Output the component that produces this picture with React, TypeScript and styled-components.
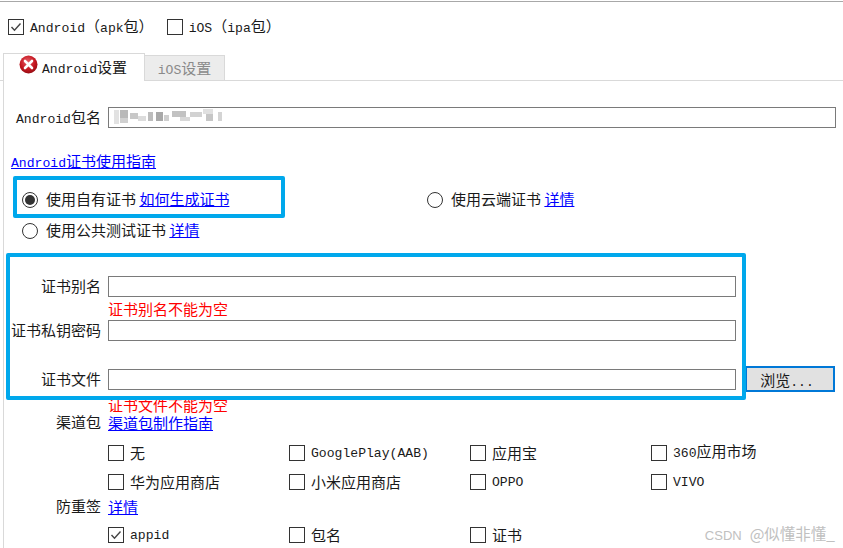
import React from "react";
import styled, { createGlobalStyle } from "styled-components";

const GlobalStyle = createGlobalStyle`
  html, body { margin: 0; padding: 0; background: #fff; }
  body { font-family: "Noto Sans CJK SC", "Liberation Mono", monospace; font-size: 15px; color: #1a1a1a; }
`;

const Page = styled.div`
  position: relative;
  width: 843px;
  height: 547px;
  overflow: hidden;
  background: #fff;
  border-top: 1px solid #a8a8a8;
  box-sizing: border-box;
  margin-top: 1px;
`;

const TopRow = styled.div`
  display: flex;
  align-items: center;
  height: 22px;
  margin-top: 14px;
  padding-left: 8px;
  gap: 13px;
`;

const Lat = styled.span`
  font-family: "Liberation Mono", monospace;
  font-size: 13.1px;
`;

const Check = styled.label`
  display: flex;
  align-items: center;
  gap: 6px;
  white-space: nowrap;
  line-height: 20px;
`;

const Box = styled.span`
  display: block;
  flex: none;
  width: 16px;
  height: 16px;
  border: 1px solid #333;
  box-sizing: border-box;
  background: #fff;
`;

const Tabs = styled.div`
  display: flex;
  align-items: flex-end;
  height: 27px;
  margin-top: 15px;
  padding-left: 3px;
  border-bottom: 1px solid #d9d9d9;
`;

const ActiveTab = styled.div`
  display: flex;
  align-items: center;
  gap: 4px;
  width: 142px;
  height: 28px;
  box-sizing: border-box;
  padding: 0 0 2px 15px;
  margin-bottom: -1px;
  border: 1px solid #d9d9d9;
  border-bottom: none;
  background: #fff;
`;

const IdleTab = styled.div`
  display: flex;
  align-items: center;
  justify-content: center;
  width: 80px;
  height: 25px;
  box-sizing: border-box;
  padding-bottom: 2px;
  border: 1px solid #d9d9d9;
  border-left: none;
  border-bottom: none;
  background: #ececec;
  color: #8a8a8a;
`;

const Panel = styled.div`
  margin-left: 3px;
  border-left: 1px solid #d9d9d9;
  height: 470px;
  padding-top: 25px;
  box-sizing: border-box;
`;

const FieldRow = styled.div<{ $mb?: number }>`
  display: grid;
  grid-template-columns: 97px 1fr;
  column-gap: 7px;
  align-items: center;
  height: 22px;
  margin-bottom: ${(p) => p.$mb ?? 0}px;
`;

const Label = styled.span`
  text-align: right;
  white-space: nowrap;
  padding-bottom: 2px;
`;

const Input = styled.div<{ $w: number }>`
  position: relative;
  width: ${(p) => p.$w}px;
  height: 21px;
  border: 1px solid #7a7a7a;
  box-sizing: border-box;
  background: #fff;
`;

const FileWrap = styled.div`
  display: flex;
  align-items: center;
  gap: 9px;
`;

const Browse = styled.button`
  width: 90px;
  height: 26px;
  flex: none;
  padding: 0 6px 0 0;
  border: 2px solid #0078d7;
  background: #e1e1e1;
  font: inherit;
  color: #1a1a1a;
`;

const Link = styled.a`
  color: #0000ff;
  text-decoration: underline;
  white-space: nowrap;
`;

const GuideRow = styled.div`
  margin-top: 22px;
  margin-left: 7px;
  height: 22px;
  line-height: 22px;
`;

const RadioGrid = styled.div`
  display: grid;
  grid-template-columns: 405px 1fr;
  grid-auto-rows: 31px;
  align-items: center;
  margin-top: 12px;
  padding-left: 18px;
`;

const RadioItem = styled.div`
  display: flex;
  align-items: center;
  gap: 8px;
  white-space: nowrap;
`;

const RadioText = styled.span`
  padding-bottom: 2px;
`;

const RadioDot = styled.span<{ $on?: boolean }>`
  display: flex;
  align-items: center;
  justify-content: center;
  width: 16px;
  height: 16px;
  flex: none;
  border-radius: 50%;
  border: 1px solid #333;
  box-sizing: border-box;
  &::after {
    content: "";
    display: ${(p) => (p.$on ? "block" : "none")};
    width: 10px;
    height: 10px;
    border-radius: 50%;
    background: #333;
  }
`;

const Fields = styled.div`
  margin-top: 29px;
`;

const ErrorText = styled.div<{ $h: number; $line: number }>`
  color: #ff0000;
  margin-left: 104px;
  height: ${(p) => p.$h}px;
  line-height: ${(p) => p.$line}px;
  white-space: nowrap;
`;

const OptionGrid = styled.div<{ $mt: number; $mb?: number }>`
  display: grid;
  grid-template-columns: repeat(4, 181px);
  grid-auto-rows: 29px;
  align-items: center;
  margin-left: 104px;
  margin-top: ${(p) => p.$mt}px;
  margin-bottom: ${(p) => p.$mb ?? 0}px;
`;

const Highlight = styled.div<{ $x: number; $y: number; $w: number; $h: number }>`
  position: absolute;
  left: ${(p) => p.$x}px;
  top: ${(p) => p.$y}px;
  width: ${(p) => p.$w}px;
  height: ${(p) => p.$h}px;
  border: 4px solid #00a8ec;
  border-radius: 2px;
  box-sizing: border-box;
  pointer-events: none;
`;

const Watermark = styled.div`
  position: absolute;
  right: 8px;
  bottom: 4px;
  display: flex;
  align-items: baseline;
  gap: 8px;
  color: #c0c0c0;
  font-size: 15.5px;
  white-space: nowrap;
`;

const WatermarkBrand = styled.span`
  font-family: "Liberation Sans", sans-serif;
  font-size: 13px;
`;

const Mosaic = styled.svg`
  position: absolute;
  left: 1px;
  top: -3px;
`;

const TickBox = () => (
  <Box>
    <svg width="14" height="14" viewBox="0 0 14 14" style={{ display: "block" }}>
      <path d="M2.5 7 L5.5 10.2 L11.5 3.5" fill="none" stroke="#444" strokeWidth="1.4" />
    </svg>
  </Box>
);

const ErrorIcon = () => (
  <svg width="19" height="19" viewBox="0 0 19 19" style={{ flex: "none", marginTop: -4 }}>
    <defs>
      <radialGradient id="err" cx="45%" cy="35%" r="70%">
        <stop offset="0%" stopColor="#e8606a" />
        <stop offset="60%" stopColor="#c4161f" />
        <stop offset="100%" stopColor="#8c0c12" />
      </radialGradient>
    </defs>
    <circle cx="9.5" cy="9.5" r="9" fill="url(#err)" />
    <path d="M6 6 L13 13 M13 6 L6 13" stroke="#fff" strokeWidth="2.6" strokeLinecap="round" />
  </svg>
);

// blurred-out package name
const mosaicCells: [number, number, number, number, string][] = [
  [4, 5, 5, 14, "#e2e2e2"], [10, 5, 8, 8, "#b9b9b9"], [10, 13, 8, 5, "#d0d0d0"], [20, 8, 8, 6, "#c8c8c8"],
  [28, 11, 8, 5, "#dcdcdc"], [38, 7, 5, 9, "#bdbdbd"], [46, 7, 7, 9, "#a9a9a9"], [54, 10, 5, 6, "#cfcfcf"],
  [62, 6, 14, 6, "#c2c2c2"], [70, 12, 10, 4, "#d8d8d8"], [80, 7, 12, 5, "#d2d2d2"], [93, 4, 10, 5, "#e0e0e0"],
  [96, 9, 7, 7, "#c6c6c6"], [108, 7, 4, 9, "#d4d4d4"],
];

const channels = [
  "无", "GooglePlay(AAB)", "应用宝", "360应用市场",
  "华为应用商店", "小米应用商店", "OPPO", "VIVO",
];

// wraps the ascii runs so latin and CJK keep the reference's widths
const Mixed = ({ text }: { text: string }) => (
  <>
    {text.split(/([\x20-\x7e]+)/).map((part, i) =>
      /[\x20-\x7e]/.test(part) ? <Lat key={i}>{part}</Lat> : part
    )}
  </>
);

export default function App() {
  return (
    <Page>
      <GlobalStyle />
      <TopRow>
        <Check>
          <TickBox />
          <span><Mixed text="Android（apk包）" /></span>
        </Check>
        <Check>
          <Box />
          <span><Mixed text="iOS（ipa包）" /></span>
        </Check>
      </TopRow>
      <Tabs>
        <ActiveTab>
          <ErrorIcon />
          <span><Mixed text="Android设置" /></span>
        </ActiveTab>
        <IdleTab><span><Mixed text="iOS设置" /></span></IdleTab>
      </Tabs>
      <Panel>
        <FieldRow>
          <Label><Mixed text="Android包名" /></Label>
          <Input $w={728}>
            <Mosaic width="120" height="24">
              {mosaicCells.map(([x, y, w, h, c], i) => (
                <rect key={i} x={x} y={y} width={w} height={h} fill={c} />
              ))}
            </Mosaic>
          </Input>
        </FieldRow>
        <GuideRow>
          <Link><Mixed text="Android证书使用指南" /></Link>
        </GuideRow>
        <RadioGrid>
          <RadioItem>
            <RadioDot $on />
            <RadioText>使用自有证书 <Link>如何生成证书</Link></RadioText>
          </RadioItem>
          <RadioItem>
            <RadioDot />
            <RadioText>使用云端证书 <Link>详情</Link></RadioText>
          </RadioItem>
          <RadioItem>
            <RadioDot />
            <RadioText>使用公共测试证书 <Link>详情</Link></RadioText>
          </RadioItem>
        </RadioGrid>
        <Fields>
          <FieldRow>
            <Label>证书别名</Label>
            <Input $w={628} />
          </FieldRow>
          <ErrorText $h={22} $line={24}>证书别名不能为空</ErrorText>
          <FieldRow $mb={25}>
            <Label>证书私钥密码</Label>
            <Input $w={628} />
          </FieldRow>
          <FieldRow>
            <Label>证书文件</Label>
            <FileWrap>
              <Input $w={628} />
              <Browse>浏览<Lat>...</Lat></Browse>
            </FileWrap>
          </FieldRow>
          <ErrorText $h={23} $line={34}>证书文件不能为空</ErrorText>
        </Fields>
        <FieldRow>
          <Label>渠道包</Label>
          <span><Link>渠道包制作指南</Link></span>
        </FieldRow>
        <OptionGrid $mt={5} $mb={-1}>
          {channels.map((name) => (
            <Check key={name}>
              <Box />
              <span><Mixed text={name} /></span>
            </Check>
          ))}
        </OptionGrid>
        <FieldRow>
          <Label>防重签</Label>
          <span><Link>详情</Link></span>
        </FieldRow>
        <OptionGrid $mt={3}>
          <Check><TickBox /><span><Lat>appid</Lat></span></Check>
          <Check><Box /><span>包名</span></Check>
          <Check><Box /><span>证书</span></Check>
        </OptionGrid>
      </Panel>
      <Highlight $x={13} $y={174} $w={272} $h={42} />
      <Highlight $x={6} $y={251} $w={740} $h={147} />
      <Watermark><WatermarkBrand>CSDN</WatermarkBrand><span>@似懂非懂_</span></Watermark>
    </Page>
  );
}
